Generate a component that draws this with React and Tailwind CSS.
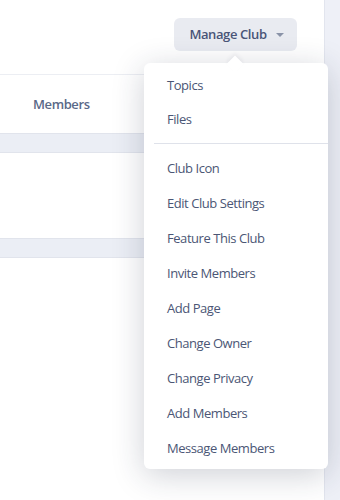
const menu = [
  ['Topics', 'Files'],
  [
    'Club Icon',
    'Edit Club Settings',
    'Feature This Club',
    'Invite Members',
    'Add Page',
    'Change Owner',
    'Change Privacy',
    'Add Members',
    'Message Members',
  ],
]

function Dropdown() {
  return (
    <div className="absolute left-[144px] top-[63px] w-[184px] h-[406px] bg-white rounded-md shadow-[0_6px_32px_rgba(30,40,70,0.22)] pt-[6px]">
      {/* caret */}
      <div className="absolute left-[85px] -top-[5px] w-[12px] h-[12px] bg-white rotate-45 shadow-[-2px_-2px_4px_rgba(30,40,70,0.06)]" />
      <div className="relative tracking-[-0.45px]">
        {menu[0].map(item => (
          <div key={item} className="h-[34px] flex items-center pl-[23px] text-[13px] text-[#4b5675]">{item}</div>
        ))}
        <div className="ml-[10px] mt-[6px] mb-[7px] border-t border-[#dfe2ea]" />
        {menu[1].map(item => (
          <div key={item} className="h-[35px] flex items-center pl-[23px] text-[13px] text-[#4b5675]">{item}</div>
        ))}
      </div>
    </div>
  )
}

export default function App() {
  return (
    <div className="relative w-[340px] h-[500px] flex overflow-hidden bg-white" style={{ fontFamily: '"Open Sans", "Noto Sans", sans-serif' }}>
      <main className="w-[324px] flex flex-col">
        <div className="h-[74px] flex justify-end items-start pt-[18px] pr-[27px]">
          <button className="h-[33px] w-[123px] rounded-md bg-[#e9ebf1] flex items-center justify-center gap-[9px] pl-[2px] text-[13px] font-semibold tracking-[-0.4px] text-[#4a5578]">
            Manage Club
            <span className="w-0 h-0 border-l-[4px] border-r-[4px] border-t-[4px] border-l-transparent border-r-transparent border-t-[#8a93a8]" />
          </button>
        </div>
        <div className="h-[59px] border-t border-[#eceef3] flex items-center pl-[33px] pt-[1px]">
          <span className="text-[13px] font-semibold tracking-[-0.4px] text-[#5a6988]">Members</span>
        </div>
        <div className="h-[20px] bg-[#ebeef5] border-y border-[#e1e4ec]" />
        <div className="h-[85px]" />
        <div className="h-[20px] bg-[#ebeef5] border-y border-[#e1e4ec]" />
        <div className="flex-1" />
      </main>
      <aside className="flex-1 bg-[#eef0f7] border-l border-[#e2e5ee]" />
      <Dropdown />
    </div>
  )
}
